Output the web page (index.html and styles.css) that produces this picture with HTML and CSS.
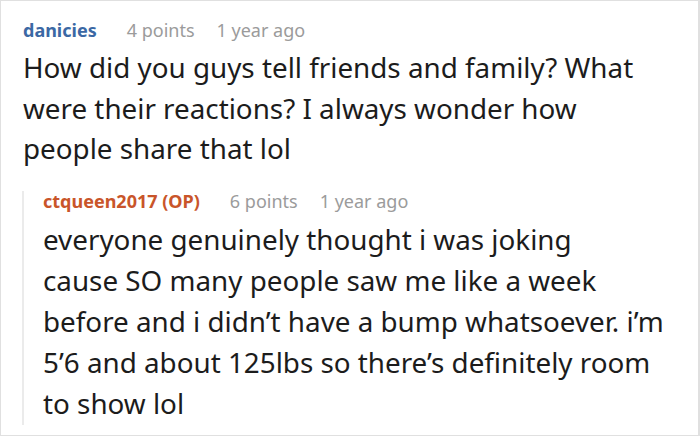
FILE: index.html
```html
<!DOCTYPE html>
<html>
<head>
<meta charset="utf-8">
<link rel="stylesheet" href="styles.css">
</head>
<body>
<div class="frame">
  <div class="comment">
    <div class="meta">
      <span class="author">danicies</span>
      <span class="points">4 points</span>
      <span class="time">1 year ago</span>
    </div>
    <p class="body">How did you guys tell friends and family? What<br>were their reactions? I always wonder how<br>people share that lol</p>
  </div>
  <div class="reply">
    <div class="meta">
      <span class="author op">ctqueen2017 (OP)</span>
      <span class="points">6 points</span>
      <span class="time">1 year ago</span>
    </div>
    <p class="body">everyone genuinely thought i was joking<br>cause SO many people saw me like a week<br>before and i didn’t have a bump whatsoever. i’m<br>5’6 and about 125lbs so there’s definitely room<br>to show lol</p>
  </div>
</div>
</body>
</html>
```
FILE: styles.css
```css
* { box-sizing: border-box; }
html, body { margin: 0; padding: 0; background: #fff; }
body { font-family: "Noto Sans", "Open Sans", sans-serif; color: #1c1c1c; }
.frame {
  width: 700px;
  height: 436px;
  border: 1px solid #e0e0e0;
  border-right-width: 2px;
  padding: 19px 0 0 21px;
  overflow: hidden;
}
.comment { padding-left: 1px; }
.meta {
  display: flex;
  font-size: 18px;
  line-height: 20px;
}
.author { font-weight: 700; color: #3b68a4; margin-right: 30px; }
.author.op { color: #c9552a; }
.points, .time { color: #9b9b9b; }
.points { margin-right: 22px; }
.body {
  margin: 7px 0 0;
  font-size: 27.8px;
  line-height: 40.5px;
  white-space: nowrap;
}
.reply {
  margin-top: 22px;
  border-left: 2px solid #ebebeb;
  padding-left: 19px;
}
.reply .body {
  margin-top: 8px;
  line-height: 41.2px;
  margin-bottom: -8px;
}
```
